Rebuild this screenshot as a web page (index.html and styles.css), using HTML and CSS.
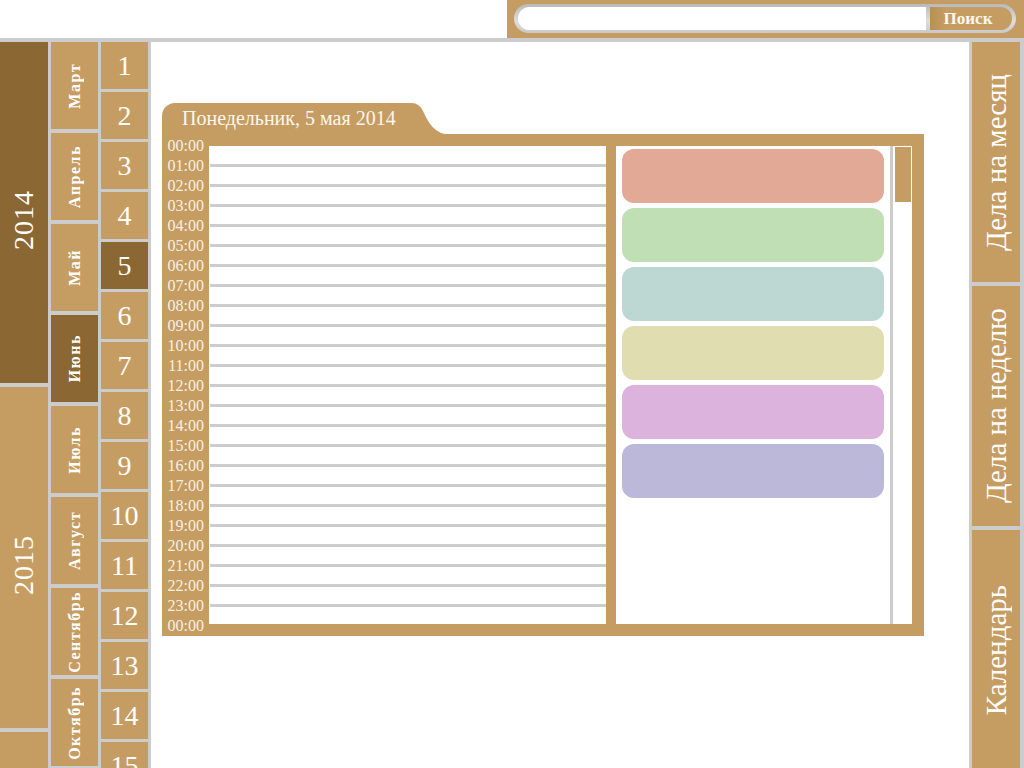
FILE: index.html
```html
<!DOCTYPE html>
<html lang="ru">
<head>
<meta charset="utf-8">
<title>Ежедневник</title>
<link rel="stylesheet" href="styles.css">
</head>
<body>
<header class="topbar">
  <form class="search">
    <div class="pill">
      <div class="field"></div>
      <div class="btn">Поиск</div>
    </div>
  </form>
</header>
<main class="main">
  <nav class="col years">
    <div class="box year active"><span class="vt">2014</span></div>
    <div class="box year"><span class="vt">2015</span></div>
    <div class="box year"><span class="vt"></span></div>
  </nav>
  <nav class="col months">
    <div class="box month"><span class="vt">Март</span></div>
    <div class="box month"><span class="vt">Апрель</span></div>
    <div class="box month"><span class="vt">Май</span></div>
    <div class="box month active"><span class="vt">Июнь</span></div>
    <div class="box month"><span class="vt">Июль</span></div>
    <div class="box month"><span class="vt">Август</span></div>
    <div class="box month"><span class="vt">Сентябрь</span></div>
    <div class="box month"><span class="vt">Октябрь</span></div>
  </nav>
  <nav class="col days">
    <div class="box day">1</div>
    <div class="box day">2</div>
    <div class="box day">3</div>
    <div class="box day">4</div>
    <div class="box day active">5</div>
    <div class="box day">6</div>
    <div class="box day">7</div>
    <div class="box day">8</div>
    <div class="box day">9</div>
    <div class="box day">10</div>
    <div class="box day">11</div>
    <div class="box day">12</div>
    <div class="box day">13</div>
    <div class="box day">14</div>
    <div class="box day">15</div>
  </nav>
  <section class="content">
    <div class="planner">
      <div class="tabrow">
        <div class="tab">Понедельник, 5 мая 2014</div>
        <svg class="tabcurve" width="37" height="31" viewBox="0 0 37 31"><path d="M0 0 L4 0 Q11 0 15 8 Q21 22 28 27 Q32 30 37 31 L0 31 Z" fill="#c59d63"/></svg>
      </div>
      <div class="panel">
        <div class="times">
          <div>00:00</div><div>01:00</div><div>02:00</div><div>03:00</div><div>04:00</div>
          <div>05:00</div><div>06:00</div><div>07:00</div><div>08:00</div><div>09:00</div>
          <div>10:00</div><div>11:00</div><div>12:00</div><div>13:00</div><div>14:00</div>
          <div>15:00</div><div>16:00</div><div>17:00</div><div>18:00</div><div>19:00</div>
          <div>20:00</div><div>21:00</div><div>22:00</div><div>23:00</div><div>00:00</div>
        </div>
        <div class="timeline">
          <div class="hour"></div><div class="hour"></div><div class="hour"></div><div class="hour"></div>
          <div class="hour"></div><div class="hour"></div><div class="hour"></div><div class="hour"></div>
          <div class="hour"></div><div class="hour"></div><div class="hour"></div><div class="hour"></div>
          <div class="hour"></div><div class="hour"></div><div class="hour"></div><div class="hour"></div>
          <div class="hour"></div><div class="hour"></div><div class="hour"></div><div class="hour"></div>
          <div class="hour"></div><div class="hour"></div><div class="hour"></div>
        </div>
        <div class="tasks">
          <div class="cards">
            <div class="card c1"></div>
            <div class="card c2"></div>
            <div class="card c3"></div>
            <div class="card c4"></div>
            <div class="card c5"></div>
            <div class="card c6"></div>
          </div>
          <div class="track"><div class="thumb"></div></div>
        </div>
      </div>
    </div>
  </section>
  <nav class="col tabs">
    <div class="box side"><span class="vt">Дела на месяц</span></div>
    <div class="box side"><span class="vt">Дела на неделю</span></div>
    <div class="box side"><span class="vt">Календарь</span></div>
  </nav>
</main>
</body>
</html>
```
FILE: styles.css
```css
* { box-sizing: border-box; }
html, body { margin: 0; padding: 0; }
body {
  width: 1024px;
  height: 768px;
  overflow: hidden;
  background: #fff;
  font-family: "Liberation Serif", "Times New Roman", serif;
  color: #fff;
}

.topbar {
  height: 41px;
  display: flex;
  justify-content: flex-end;
  border-bottom: 3px solid #cccccc;
}
.search {
  margin: 0;
  width: 517px;
  height: 38px;
  background: #c59d63;
  padding: 4px 8px 5px 7px;
}
.pill {
  height: 29px;
  border-radius: 15px;
  background: linear-gradient(#b9b9b9, #dedede 60%, #c8c8c8);
  padding: 3px 4px 3px 4px;
  display: flex;
  gap: 4px;
}
.field {
  flex: 1;
  background: #fff;
  border-radius: 12px 0 0 12px;
}
.btn {
  width: 82px;
  background: linear-gradient(90deg, #b98f55, #c59d63 20%);
  border-radius: 0 12px 12px 0;
  font-weight: bold;
  font-size: 17px;
  line-height: 23px;
  text-align: center;
  color: #fbf6ee;
  padding-right: 6px;
}

.main {
  height: 727px;
  display: flex;
  gap: 3px;
  padding: 1px 4px 0 0;
  background: #cccccc;
  overflow: hidden;
}
.col {
  display: flex;
  flex-direction: column;
  flex-shrink: 0;
}
.box {
  background: #c59d63;
  display: flex;
  align-items: center;
  justify-content: center;
  flex-shrink: 0;
  overflow: hidden;
}
.box.active { background: #8b6733; }
.vt {
  writing-mode: vertical-rl;
  transform: rotate(180deg);
  white-space: nowrap;
}

.years { width: 48px; gap: 4px; }
.year { height: 341px; font-size: 28px; letter-spacing: 1px; padding-top: 14px; }

.months { width: 47px; gap: 4px; }
.month { height: 87px; font-size: 16px; font-weight: bold; letter-spacing: 1.5px; }

.days { width: 47px; gap: 3px; }
.day { height: 47px; font-size: 28px; }

.content {
  flex: 1;
  background: #fff;
  padding: 61px 0 0 11px;
}
.planner { width: 762px; }
.tabrow { display: flex; align-items: flex-end; height: 31px; }
.tab {
  width: 246px;
  height: 31px;
  background: #c59d63;
  border-radius: 13px 0 0 0;
  padding-left: 20px;
  font-size: 20px;
  line-height: 31px;
  color: #fbf6ee;
  white-space: nowrap;
}
.tabcurve { display: block; }

.panel {
  height: 502px;
  background: #c59d63;
  padding: 12px 12px 12px 0;
  display: flex;
}
.times {
  width: 47px;
  margin-top: -10px;
  padding-right: 5px;
  text-align: right;
  font-size: 16px;
  line-height: 20px;
  color: #f8efe0;
  flex-shrink: 0;
}
.times div { height: 20px; }
.timeline {
  width: 397px;
  background: #fff;
  padding: 18px 0 0 1px;
  flex-shrink: 0;
}
.hour {
  height: 20px;
  border-top: 3px solid #cccccc;
}
.tasks {
  width: 296px;
  margin-left: 10px;
  background: #fff;
  display: flex;
}
.cards {
  flex: 1;
  padding: 3px 6px 0 6px;
  display: flex;
  flex-direction: column;
  gap: 5px;
  border-right: 3px solid #cccccc;
}
.card {
  height: 54px;
  border-radius: 12px;
}
.c1 { background: #e1a996; }
.c2 { background: #c0dfb5; }
.c3 { background: #bdd7d3; }
.c4 { background: #e0ddb0; }
.c5 { background: #dcb3dc; }
.c6 { background: #bbb8da; }
.track { width: 19px; padding: 0 0 0 1px; }
.thumb {
  height: 57px;
  background: #c59d63;
  border: 1px solid #fff;
}

.tabs { width: 48px; gap: 4px; }
.side { height: 240px; font-size: 29px; }
```
